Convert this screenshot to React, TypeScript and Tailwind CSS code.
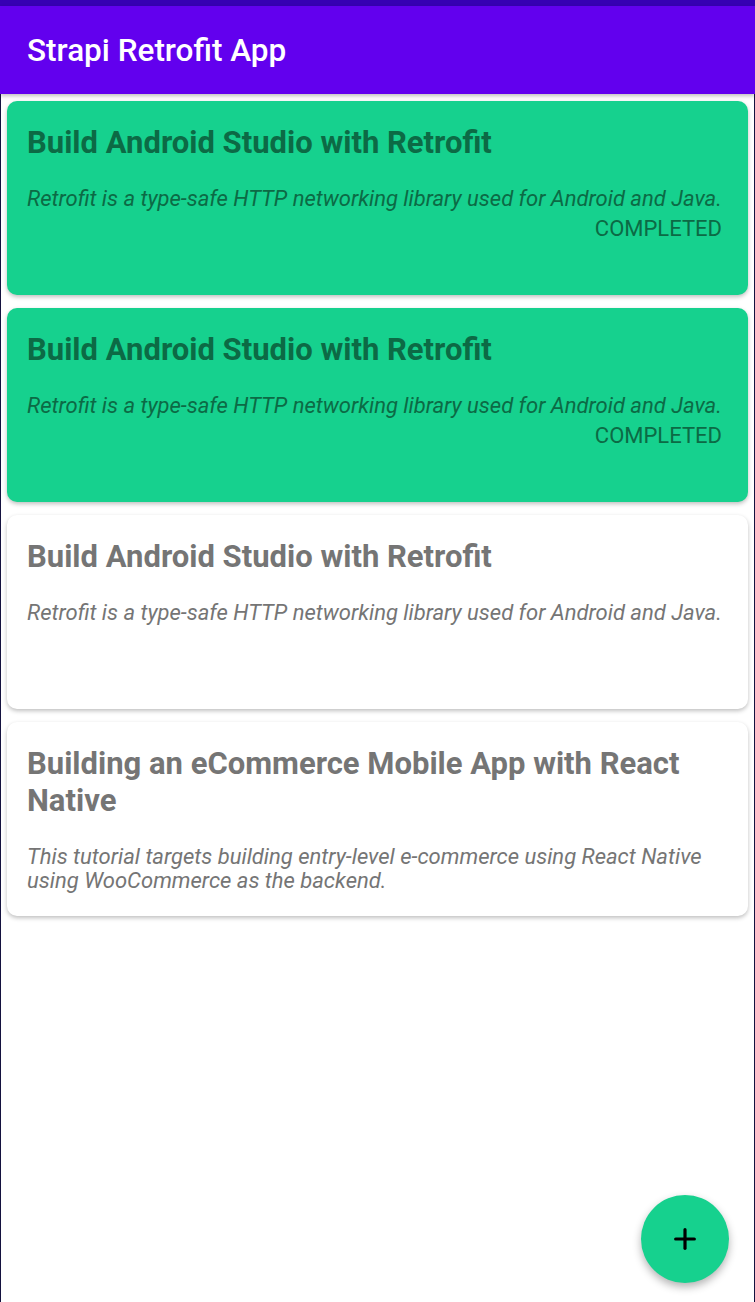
import { Plus } from 'lucide-react'

type Post = {
  title: string
  description: string
  completed: boolean
}

const posts: Post[] = [
  {
    title: 'Build Android Studio with Retrofit',
    description: 'Retrofit is a type-safe HTTP networking library used for Android and Java.',
    completed: true
  },
  {
    title: 'Build Android Studio with Retrofit',
    description: 'Retrofit is a type-safe HTTP networking library used for Android and Java.',
    completed: true
  },
  {
    title: 'Build Android Studio with Retrofit',
    description: 'Retrofit is a type-safe HTTP networking library used for Android and Java.',
    completed: false
  },
  {
    title: 'Building an eCommerce Mobile App with React Native',
    description: 'This tutorial targets building entry-level e-commerce using React Native using WooCommerce as the backend.',
    completed: false
  }
]

function PostCard({ post }: { post: Post }) {
  const text = post.completed ? 'text-[#0c6a45]' : 'text-[#757575]'
  return (
    <div
      className={`h-[194px] rounded-[10px] pl-5 pr-[26px] pt-[23px] shadow-[0_2px_4px_rgba(0,0,0,0.25)] ${
        post.completed ? 'bg-[#16d18e]' : 'bg-white'
      }`}
    >
      <h2 className={`text-[31px] font-bold leading-[37px] ${text}`}>{post.title}</h2>
      <p className={`mt-[26px] text-[22px] italic leading-[24px] ${text}`}>{post.description}</p>
      {post.completed && (
        <p className={`mt-[6px] text-right text-[22px] leading-[24px] ${text}`}>COMPLETED</p>
      )}
    </div>
  )
}

export default function App() {
  return (
    <div className="relative flex h-[1302px] flex-col bg-white font-['Roboto',sans-serif]">
      <div className="h-[6px] bg-[#3700b3]" />
      <header className="flex h-[88px] items-center bg-[#6200ee] px-[27px] pt-[2px] shadow-[0_2px_4px_rgba(0,0,0,0.25)]">
        <h1 className="text-[31.5px] font-medium leading-none text-white">Strapi Retrofit App</h1>
      </header>
      <main className="flex flex-1 flex-col gap-[13px] border-x border-[#14123f] px-[6px] pt-[7px]">
        {posts.map((post, i) => (
          <PostCard key={i} post={post} />
        ))}
      </main>
      <button className="absolute bottom-[19px] right-[26px] flex h-[88px] w-[88px] items-center justify-center rounded-full bg-[#16d18e] shadow-[0_4px_8px_rgba(0,0,0,0.3)]">
        <Plus className="h-[32px] w-[32px] text-black" strokeWidth={2.4} />
      </button>
    </div>
  )
}
